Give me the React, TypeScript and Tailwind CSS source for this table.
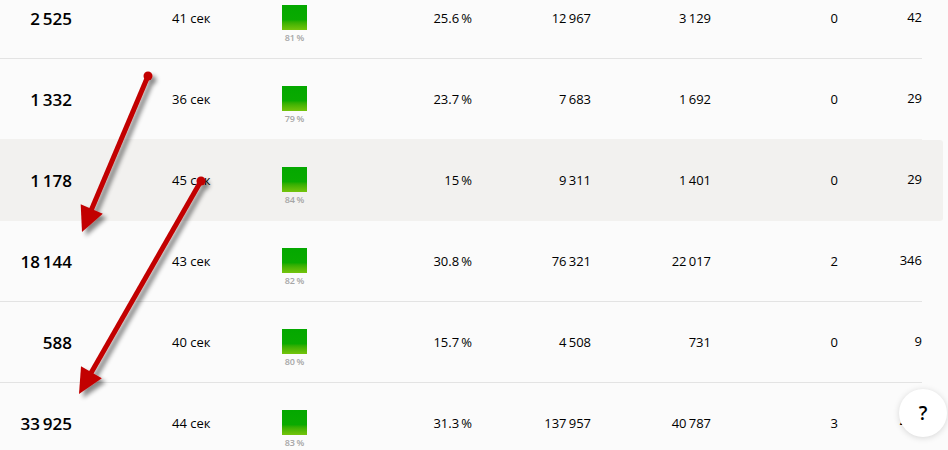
import React from "react";

type Row = {
  total: string;
  time: string;
  pct: string;
  bounce: string;
  a: string;
  b: string;
  c: string;
  d: string;
  hl?: boolean;
  beforeHl?: boolean;
};

const T = "\u2009";

const rows: Row[] = [
  { total: `2${T}525`, time: "41 сек", pct: `81${T}%`, bounce: `25.6${T}%`, a: `12${T}967`, b: `3${T}129`, c: "0", d: "42" },
  { total: `1${T}332`, time: "36 сек", pct: `79${T}%`, bounce: `23.7${T}%`, a: `7${T}683`, b: `1${T}692`, c: "0", d: "29", beforeHl: true },
  { total: `1${T}178`, time: "45 сек", pct: `84${T}%`, bounce: `15${T}%`, a: `9${T}311`, b: `1${T}401`, c: "0", d: "29", hl: true },
  { total: `18${T}144`, time: "43 сек", pct: `82${T}%`, bounce: `30.8${T}%`, a: `76${T}321`, b: `22${T}017`, c: "2", d: "346" },
  { total: "588", time: "40 сек", pct: `80${T}%`, bounce: `15.7${T}%`, a: `4${T}508`, b: "731", c: "0", d: "9" },
  { total: `33${T}925`, time: "44 сек", pct: `83${T}%`, bounce: `31.3${T}%`, a: `137${T}957`, b: `40${T}787`, c: "3", d: "456" },
];

function TableRow({ r }: { r: Row }) {
  return (
    <div className={`w-[943px] rounded-r-[3px] ${r.hl ? "bg-[#f2f1ef]" : ""}`}>
      <div
        className={`grid h-[81px] w-[922px] grid-cols-[72px_210px_50px_140px_119px_120px_127px_84px] items-center border-b pt-[2px] ${
          r.hl || r.beforeHl ? "border-[#f2f1ef]" : "border-[#e3e3e3]"
        }`}
      >
        <div className="text-right text-[17px] font-semibold text-black">{r.total}</div>
        <div className="pl-[100px] text-[13px] text-black">{r.time}</div>
        <div className="flex flex-col items-start self-start pt-[25px]">
          <div className="h-[25px] w-[25px] bg-linear-to-b from-[#04a800] via-[#0aaa00] via-60% to-[#74c40c]" />
          <div className="mt-[2px] w-[25px] text-center text-[9px] font-semibold leading-[11px] text-[#a6a6a6]">{r.pct}</div>
        </div>
        <div className="text-right text-[13px] text-black">{r.bounce}</div>
        <div className="text-right text-[13px] text-black">{r.a}</div>
        <div className="text-right text-[13px] text-black">{r.b}</div>
        <div className="text-right text-[13px] text-black">{r.c}</div>
        <div className="pb-[3px] text-right text-[13px] text-black">{r.d}</div>
      </div>
    </div>
  );
}

function Arrow({ x1, y1, tx, ty }: { x1: number; y1: number; tx: number; ty: number }) {
  const dx = tx - x1;
  const dy = ty - y1;
  const len = Math.sqrt(dx * dx + dy * dy);
  const ux = dx / len;
  const uy = dy / len;
  const px = -uy;
  const py = ux;
  const hl = 25;
  const hw = 12;
  const bx = tx - ux * hl;
  const by = ty - uy * hl;
  const pts = `${tx},${ty} ${bx + px * hw},${by + py * hw} ${bx - px * hw},${by - py * hw}`;
  return (
    <g filter="url(#shadow)">
      <line x1={x1} y1={y1} x2={bx + ux * 2} y2={by + uy * 2} stroke="#c20000" strokeWidth={5} />
      <circle cx={x1} cy={y1} r={4.5} fill="#c20000" />
      <polygon points={pts} fill="#c20000" />
    </g>
  );
}

export default function App() {
  return (
    <div
      className="relative h-[450px] w-[948px] overflow-hidden bg-[#fbfbfb]"
      style={{ fontFamily: '"Open Sans", "Noto Sans", sans-serif' }}
    >
      <div className="-mt-[22px] flex flex-col">
        {rows.map((r, i) => (
          <TableRow key={i} r={r} />
        ))}
      </div>

      <svg className="pointer-events-none absolute left-0 top-0" width={948} height={450}>
        <defs>
          <filter id="shadow" x="-50%" y="-50%" width="200%" height="200%">
            <feDropShadow dx="4" dy="4" stdDeviation="2" floodColor="#000" floodOpacity="0.45" />
          </filter>
        </defs>
        <Arrow x1={148} y1={76} tx={82} ty={232} />
        <Arrow x1={201} y1={181} tx={79} ty={394} />
      </svg>

      <div className="absolute left-[899px] top-[389px] flex h-[48px] w-[48px] items-center justify-center rounded-full bg-white text-[19px] font-semibold text-black shadow-[0_1px_6px_rgba(0,0,0,0.15)]">
        ?
      </div>
    </div>
  );
}
